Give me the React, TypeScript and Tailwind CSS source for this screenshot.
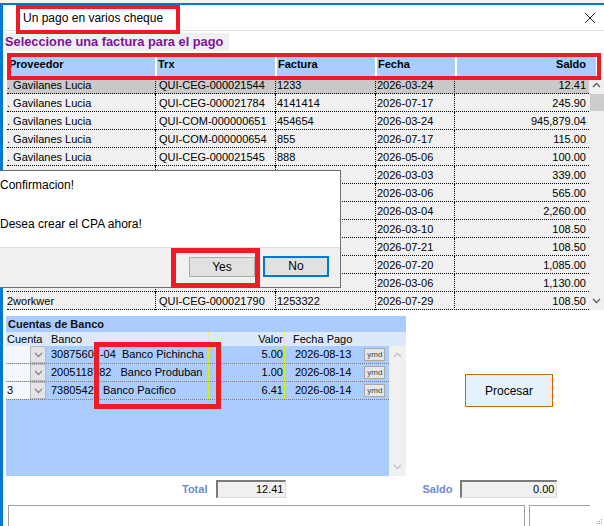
import React from 'react';

// rows 6-12 sit under the confirm dialog, only fecha/saldo are visible
const facturas = [
  { prov: '. Gavilanes Lucia', trx: 'QUI-CEG-000021544', fac: '1233', fecha: '2026-03-24', saldo: '12.41' },
  { prov: '. Gavilanes Lucia', trx: 'QUI-CEG-000021784', fac: '4141414', fecha: '2026-07-17', saldo: '245.90' },
  { prov: '. Gavilanes Lucia', trx: 'QUI-COM-000000651', fac: '454654', fecha: '2026-03-24', saldo: '945,879.04' },
  { prov: '. Gavilanes Lucia', trx: 'QUI-COM-000000654', fac: '855', fecha: '2026-07-17', saldo: '115.00' },
  { prov: '. Gavilanes Lucia', trx: 'QUI-CEG-000021545', fac: '888', fecha: '2026-05-06', saldo: '100.00' },
  { prov: '', trx: '', fac: '', fecha: '2026-03-03', saldo: '339.00' },
  { prov: '', trx: '', fac: '', fecha: '2026-03-06', saldo: '565.00' },
  { prov: '', trx: '', fac: '', fecha: '2026-03-04', saldo: '2,260.00' },
  { prov: '', trx: '', fac: '', fecha: '2026-03-10', saldo: '108.50' },
  { prov: '', trx: '', fac: '', fecha: '2026-07-21', saldo: '108.50' },
  { prov: '', trx: '', fac: '', fecha: '2026-07-20', saldo: '1,085.00' },
  { prov: '', trx: '', fac: '', fecha: '2026-03-06', saldo: '1,130.00' },
  { prov: '2workwer', trx: 'QUI-CEG-000021790', fac: '1253322', fecha: '2026-07-29', saldo: '108.50' },
];

const cuentas = [
  { cta: '', banco: '30875607-04  Banco Pichincha', valor: '5.00', fecha: '2026-08-13' },
  { cta: '', banco: '2005118782   Banco Produban', valor: '1.00', fecha: '2026-08-14' },
  { cta: '3', banco: '7380542   Banco Pacifico', valor: '6.41', fecha: '2026-08-14' },
];

function Chevron({ up, color = '#606060' }: { up?: boolean; color?: string }) {
  return (
    <svg width="9" height="6" viewBox="0 0 9 6">
      <polyline
        points={up ? '1,5 4.5,1.5 8,5' : '1,1 4.5,4.5 8,1'}
        fill="none"
        stroke={color}
        strokeWidth="1.4"
      />
    </svg>
  );
}

export default function App() {
  return (
    <div className="relative w-[604px] h-[526px] overflow-hidden bg-white font-['Liberation_Sans',Arial,sans-serif] text-black">
      <div className="h-[3px] bg-[#f3f3f3]" />
      <div className="border-t-2 border-l-[3px] border-[#0078d7] h-[523px]">
        {/* title bar */}
        <div className="h-[26px] border-b border-[#e3e3e3] flex items-center justify-between pl-[20px] pr-[8px]">
          <span className="text-[12px] leading-[14px]">Un pago en varios cheque</span>
          <svg width="12" height="12" viewBox="0 0 12 12">
            <line x1="1" y1="1" x2="11" y2="11" stroke="#222" strokeWidth="1" />
            <line x1="11" y1="1" x2="1" y2="11" stroke="#222" strokeWidth="1" />
          </svg>
        </div>

        <div className="mt-[2px] ml-[2px] w-[224px] h-[18px] bg-[#f0f0f0] text-[12.8px] leading-[18px] font-bold text-[#80109a] whitespace-nowrap">
          Seleccione una factura para el pago
        </div>

        {/* facturas table */}
        <div className="mt-[5px] ml-[4px]">
          <div className="grid grid-cols-[148px_118px_98px_78px_139px] gap-x-[2px] h-[20px] text-[11px] font-bold leading-[16px]">
            <div className="bg-[#aaccff] pl-[2px]">Proveedor</div>
            <div className="bg-[#aaccff] pl-[1px]">Trx</div>
            <div className="bg-[#aaccff] pl-[1px]">Factura</div>
            <div className="bg-[#aaccff] pl-[1px]">Fecha</div>
            <div className="bg-[#aaccff] pr-[10px] text-right">Saldo</div>
          </div>
          <div className="flex">
            <div className="w-[582px] text-[11px]">
              {facturas.map((f, i) => (
                <div
                  key={i}
                  className={`grid grid-cols-[148px_120px_100px_79px_135px] h-[18px] leading-[18px] border-b border-dotted border-black whitespace-nowrap ${i === 0 ? 'bg-[#c9c9c9]' : 'bg-[#f0f0f0]'}`}
                >
                  <div className="overflow-hidden">{f.prov}</div>
                  <div className="border-l border-dotted border-black pl-[3px] overflow-hidden">{f.trx}</div>
                  <div className="border-l border-dotted border-black pl-[1px] overflow-hidden">{f.fac}</div>
                  <div className="border-l border-dotted border-black pl-[1px]">{f.fecha}</div>
                  <div className="border-l border-dotted border-black pr-[3px] text-right">{f.saldo}</div>
                </div>
              ))}
            </div>
            <div className="w-[15px] bg-[#f0f0f0] flex flex-col items-center">
              <div className="h-[18px] flex items-center">
                <Chevron up />
              </div>
              <div className="w-[14px] h-[17px] bg-[#cdcdcd]" />
              <div className="flex-1" />
              <div className="h-[18px] flex items-center">
                <Chevron />
              </div>
            </div>
          </div>
        </div>

        {/* cuentas de banco */}
        <div className="mt-[6px] flex">
          <div className="ml-[3px] w-[400px] h-[160px] bg-[#aaccff] flex flex-col text-[11px]">
            <div className="h-[16px] pl-[2px] font-bold leading-[16px] text-[#111]">Cuentas de Banco</div>
            <div className="h-[14px] bg-[#dce9fb] grid grid-cols-[43px_159px_76px_1fr] leading-[14px]">
              <div className="pl-[1px]">Cuenta</div>
              <div className="border-l border-dotted border-[#f5f500] pl-[1px]">Banco</div>
              <div className="border-l border-dotted border-[#f5f500] pr-[1px] text-right">Valor</div>
              <div className="border-l border-dotted border-[#f5f500] pl-[8px]">Fecha Pago</div>
            </div>
            <div className="flex flex-1">
              <div className="w-[383px]">
                {cuentas.map((c, i) => (
                  <div
                    key={i}
                    className="grid grid-cols-[43px_159px_76px_1fr] h-[18px] leading-[17px] border-b border-dotted border-[#7a7a7a] whitespace-pre"
                  >
                    <div className="flex">
                      <div className="w-[24px] h-[17px] bg-[#f3f7fd] pl-[1px]">{c.cta}</div>
                      <div className="w-[16px] h-[17px] bg-[#e4e4e4] border border-[#b9b9b9] flex items-center justify-center">
                        <Chevron color="#8a8a8a" />
                      </div>
                    </div>
                    <div className="border-l border-dotted border-[#f5f500] pl-[1px] overflow-hidden">{c.banco}</div>
                    <div className="border-l border-dotted border-[#f5f500] pr-[1px] text-right">{c.valor}</div>
                    <div className="border-l border-dotted border-[#f5f500] pl-[10px] flex items-center">
                      <span>{c.fecha}</span>
                      <span className="ml-[13px] w-[21px] h-[13px] bg-[#e6e6e6] border border-[#a8a8a8] text-[8px] leading-[11px] text-center text-[#444]">
                        ymd
                      </span>
                    </div>
                  </div>
                ))}
              </div>
              <div className="w-[17px] bg-[#f0f0f0] flex flex-col items-center justify-between py-[6px]">
                <Chevron up color="#c2c2c2" />
                <Chevron color="#c2c2c2" />
              </div>
            </div>
          </div>
          <button className="ml-[59px] mt-[58px] w-[88px] h-[33px] bg-[#e5f1fb] border border-[#0078d7] outline-1 outline-dotted outline-[#d9822b] -outline-offset-1 text-[12px]">
            Procesar
          </button>
        </div>

        {/* totales */}
        <div className="mt-[4px] pl-[179px] flex items-center h-[18px] text-[11px]">
          <span className="font-bold text-[#6f8acb]">Total</span>
          <div className="ml-[9px] w-[70px] h-[18px] bg-[#f0f0f0] border-t-2 border-l-2 border-t-[#7a7a7a] border-l-[#7a7a7a] border-b border-r border-b-[#dcdcdc] border-r-[#dcdcdc] text-right pr-[2px] leading-[15px]">
            12.41
          </div>
          <span className="ml-[136px] font-bold text-[#6f8acb]">Saldo</span>
          <div className="ml-[8px] w-[97px] h-[18px] bg-[#f0f0f0] border-t-2 border-l-2 border-t-[#7a7a7a] border-l-[#7a7a7a] border-b border-r border-b-[#dcdcdc] border-r-[#dcdcdc] text-right pr-[2px] leading-[15px]">
            0.00
          </div>
        </div>

        <div className="mt-[7px] pl-[5px] flex">
          <div className="w-[517px] h-[30px] border border-b-0 border-[#a0a0a0]" />
          <div className="ml-[4px] w-[61px] h-[30px] border-t border-l border-[#a0a0a0]" />
        </div>
      </div>

      {/* resize grip */}
      <svg className="absolute right-[1px] bottom-[1px]" width="8" height="8" viewBox="0 0 8 8">
        <rect x="6" y="2" width="1" height="1" fill="#9a9a9a" />
        <rect x="4" y="4" width="1" height="1" fill="#9a9a9a" />
        <rect x="6" y="4" width="1" height="1" fill="#9a9a9a" />
        <rect x="2" y="6" width="1" height="1" fill="#9a9a9a" />
        <rect x="4" y="6" width="1" height="1" fill="#9a9a9a" />
        <rect x="6" y="6" width="1" height="1" fill="#9a9a9a" />
      </svg>

      {/* confirm dialog */}
      <div className="absolute left-[-40px] top-[170px] w-[381px] h-[118px] border border-[#6e6e6e] bg-white flex flex-col text-[12px]">
        <div className="h-[76px] pl-[39px] pt-[7px] leading-[14px]">
          <div>Confirmacion!</div>
          <div className="mt-[25px]">Desea crear el CPA ahora!</div>
        </div>
        <div className="flex-1 bg-[#f0f0f0] border-t border-[#dfdfdf] flex justify-end items-start pt-[9px] pr-[11px]">
          <button className="w-[66px] h-[20px] bg-[#e1e1e1] border border-[#adadad] leading-[18px]">Yes</button>
          <button className="ml-[8px] mt-[-1px] w-[66px] h-[21px] bg-[#e1e1e1] border-2 border-[#0078d7] leading-[17px]">No</button>
        </div>
      </div>

      {/* annotation boxes */}
      <div className="absolute left-[16px] top-[5px] w-[164px] h-[29px] border-4 border-[#ed1c24]" />
      <div className="absolute left-[7px] top-[53px] w-[594px] h-[27px] border-4 border-[#ed1c24]" />
      <div className="absolute left-[171px] top-[248px] w-[89px] h-[40px] border-[5px] border-[#ed1c24]" />
      <div className="absolute left-[94px] top-[342px] w-[127px] h-[67px] border-[5px] border-[#ed1c24]" />
    </div>
  );
}
